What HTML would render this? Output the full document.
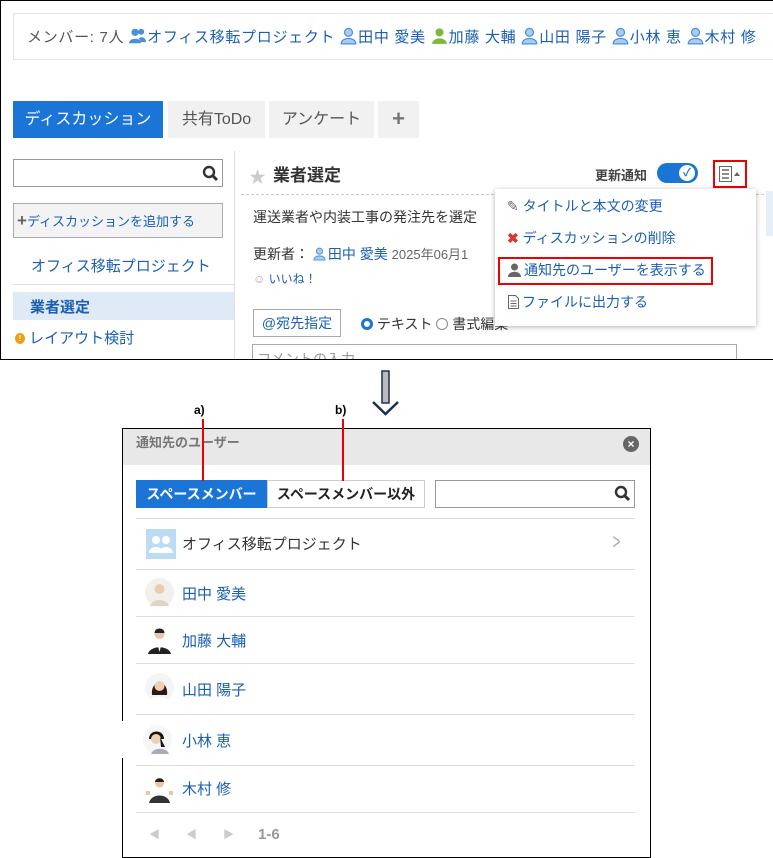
<!DOCTYPE html><html><head><meta charset="utf-8"><style>
*{margin:0;padding:0;box-sizing:border-box}
body{width:773px;height:858px;background:#fff;font-family:"Liberation Sans","Noto Sans CJK JP",sans-serif;position:relative;overflow:hidden;color:#333}
.a{position:absolute;white-space:nowrap}
.lk{color:#1a5fb4}
.ui{display:inline-block;width:13px;height:14px;vertical-align:-2px;margin-right:2px}
.mu{width:17px;height:18px;vertical-align:-3px;margin-right:1px}
</style></head><body>
<div class="a" style="left:0;top:0;width:773px;height:360px;border:1px solid #000;border-right:none;overflow:hidden">
 <div class="a" style="left:12px;top:12px;width:770px;height:47px;border:1px solid #e4e4e4;"></div>
 <div class="a" style="left:26px;top:25px;font-size:15px;color:#555;letter-spacing:0.7px">メンバー: 7人 <span class="lk"><svg class="ui mu" viewBox="0 0 14 14"><circle cx="5" cy="4" r="3" fill="#4a90d9"/><path d="M0 13c0-5 10-5 10 0z" fill="#4a90d9"/><circle cx="10" cy="3.5" r="2.5" fill="#4a90d9"/><path d="M8 9c2-2 6-1 6 3h-4z" fill="#4a90d9"/></svg>オフィス移転プロジェクト <svg class="ui mu" viewBox="0 0 14 14"><circle cx="7" cy="4" r="3.3" fill="#a9cdf0" stroke="#4a90d9"/><path d="M1 13.5c0-6 12-6 12 0z" fill="#a9cdf0" stroke="#4a90d9"/></svg>田中 愛美 <svg class="ui mu" viewBox="0 0 14 14"><circle cx="7" cy="4" r="3.3" fill="#7cb83a"/><path d="M1 13.5c0-6 12-6 12 0z" fill="#7cb83a"/></svg>加藤 大輔 <svg class="ui mu" viewBox="0 0 14 14"><circle cx="7" cy="4" r="3.3" fill="#a9cdf0" stroke="#4a90d9"/><path d="M1 13.5c0-6 12-6 12 0z" fill="#a9cdf0" stroke="#4a90d9"/></svg>山田 陽子 <svg class="ui mu" viewBox="0 0 14 14"><circle cx="7" cy="4" r="3.3" fill="#a9cdf0" stroke="#4a90d9"/><path d="M1 13.5c0-6 12-6 12 0z" fill="#a9cdf0" stroke="#4a90d9"/></svg>小林 恵 <svg class="ui mu" viewBox="0 0 14 14"><circle cx="7" cy="4" r="3.3" fill="#a9cdf0" stroke="#4a90d9"/><path d="M1 13.5c0-6 12-6 12 0z" fill="#a9cdf0" stroke="#4a90d9"/></svg>木村 修</span></div>
 <div class="a" style="left:12px;top:100px;width:150px;height:37px;background:#1a75d6;color:#fff;font-size:16px;line-height:37px;text-align:center">ディスカッション</div>
 <div class="a" style="left:167px;top:100px;width:97px;height:37px;background:#f1f1f1;color:#555;font-size:16px;line-height:37px;text-align:center">共有ToDo</div>
 <div class="a" style="left:268px;top:100px;width:105px;height:37px;background:#f1f1f1;color:#555;font-size:16px;line-height:37px;text-align:center">アンケート</div>
 <div class="a" style="left:377px;top:100px;width:41px;height:37px;background:#f1f1f1;color:#777;font-size:22px;line-height:35px;text-align:center;font-weight:bold">+</div>
 <div class="a" style="left:12px;top:158px;width:210px;height:28px;border:1px solid #999"></div>
 <svg class="a" style="left:201px;top:164px" width="17" height="17" viewBox="0 0 17 17"><circle cx="7" cy="7" r="5" fill="none" stroke="#333" stroke-width="2.4"/><path d="M10.5 10.5L15 15" stroke="#333" stroke-width="3"/></svg>
 <div class="a" style="left:12px;top:202px;width:210px;height:35px;border:1px solid #aaa;background:#f3f3f3;font-size:13px;line-height:33px;color:#1a5fb4;padding-left:3px"><b style="color:#666;font-size:17px">+</b>ディスカッションを追加する</div>
 <div class="a lk" style="left:30px;top:254px;font-size:15px">オフィス移転プロジェクト</div>
 <div class="a" style="left:12px;top:283px;width:222px;height:1px;background:#ddd"></div>
 <div class="a" style="left:12px;top:291px;width:222px;height:28px;background:#dfeaf6;font-size:15px;font-weight:bold;color:#1a5fb4;padding:4px 0 0 17px">業者選定</div>
 <div class="a" style="left:14px;top:326px;font-size:15px;color:#1a5fb4"><span style="display:inline-block;width:10px;height:11px;border-radius:50%;background:#f39c12;color:#fff;font-size:8px;line-height:11px;text-align:center;vertical-align:2px;font-weight:bold">!</span> レイアウト検討</div>
 <div class="a" style="left:233px;top:150px;width:1px;height:210px;background:#ddd"></div>
 <div class="a" style="left:248px;top:162px;font-size:17px;color:#ccc">★</div>
 <div class="a" style="left:272px;top:160px;font-size:17px;font-weight:bold;color:#333">業者選定</div>
 <div class="a" style="left:240px;top:193px;width:533px;border-top:1px dashed #ccc"></div>
 <div class="a" style="left:594px;top:164px;font-size:13px;font-weight:bold;color:#444">更新通知</div>
 <div class="a" style="left:656px;top:162px;width:41px;height:20px;border-radius:10px;background:#1a75d6"></div>
 <div class="a" style="left:678px;top:164px;width:16px;height:16px;border-radius:50%;background:#fff;color:#1a75d6;font-size:11px;line-height:16px;text-align:center;font-weight:bold">✓</div>
 <div class="a" style="left:712px;top:159px;width:34px;height:28px;border:2px solid #e00"></div>
 <svg class="a" style="left:718px;top:165px" width="22" height="16" viewBox="0 0 22 16"><rect x="0.5" y="0.5" width="12" height="15" fill="none" stroke="#666"/><path d="M3 4h7M3 8h7M3 12h7" stroke="#666" stroke-width="1.5"/><path d="M15 10l3-4 3 4z" fill="#666"/></svg>
 <div class="a" style="left:252px;top:206px;font-size:14px">運送業者や内装工事の発注先を選定</div>
 <div class="a" style="left:252px;top:243px;font-size:14px">更新者： <span class="lk"><svg class="ui" viewBox="0 0 14 14"><circle cx="7" cy="4" r="3.3" fill="#a9cdf0" stroke="#4a90d9"/><path d="M1 13.5c0-6 12-6 12 0z" fill="#a9cdf0" stroke="#4a90d9"/></svg>田中 愛美</span> <span style="color:#666;font-size:13px">2025年06月1</span></div>
 <div class="a" style="left:252px;top:269px;font-size:12px;color:#1a5fb4"><span style="color:#aaa">☺</span> いいね！</div>
 <div class="a" style="left:252px;top:308px;width:88px;height:28px;border:1px solid #aaa;font-size:14px;line-height:26px;text-align:center;color:#1a5fb4">@宛先指定</div>
 <div class="a" style="left:360px;top:313px;font-size:14px"><span style="display:inline-block;width:12px;height:12px;border-radius:50%;border:3px solid #1a75d6;background:#fff;vertical-align:-1px"></span> テキスト <span style="display:inline-block;width:12px;height:12px;border-radius:50%;border:1px solid #888;vertical-align:-1px"></span> 書式編集</div>
 <div class="a" style="left:251px;top:343px;width:485px;height:30px;border:1px solid #aaa;font-size:14px;color:#999;padding:4px">コメントの入力</div>
 <div class="a" style="left:765px;top:190px;width:8px;height:45px;background:#e6eef8"></div>
 <div class="a" style="left:494px;top:188px;width:261px;height:137px;background:#fff;box-shadow:0 1px 5px rgba(0,0,0,.3);font-size:14px;color:#1a5fb4">
  <div class="a" style="left:12px;top:7px"><span style="color:#666">✎</span> タイトルと本文の変更</div>
  <div class="a" style="left:12px;top:39px"><span style="color:#d33;font-weight:bold">✖</span> ディスカッションの削除</div>
  <div class="a" style="left:3px;top:68px;width:215px;height:28px;border:2px solid #e00"></div>
  <div class="a" style="left:12px;top:71px"><svg class="ui" viewBox="0 0 14 14" style="width:15px"><circle cx="7" cy="4" r="3.5" fill="#666"/><path d="M0.5 14c0-7 13-7 13 0z" fill="#666"/></svg>通知先のユーザーを表示する</div>
  <div class="a" style="left:12px;top:103px"><svg class="ui" viewBox="0 0 12 14"><path d="M1 .5h7l3 3V13.5H1z" fill="none" stroke="#666"/><path d="M3 6h6M3 8.5h6M3 11h6" stroke="#666"/></svg>ファイルに出力する</div>
 </div>
</div>
<svg class="a" style="left:370px;top:368px" width="32" height="50" viewBox="0 0 32 50"><rect x="12" y="3" width="7" height="32" fill="#bbb" stroke="#1c2f5a" stroke-width="1.5"/><path d="M3 34l12.5 12L28 34" fill="none" stroke="#1c2f5a" stroke-width="2.5"/></svg>
<div class="a" style="left:194px;top:403px;font-size:12px;font-weight:bold;color:#000">a)</div>
<div class="a" style="left:335px;top:403px;font-size:12px;font-weight:bold;color:#000">b)</div>
<div class="a" style="left:122px;top:428px;width:529px;height:430px;border:1px solid #000;background:#fff">
 <div class="a" style="left:0;top:0;width:527px;height:36px;background:#e8e8e8;font-size:13px;font-weight:bold;color:#777;line-height:28px;padding-left:13px">通知先のユーザー</div>
 <div class="a" style="left:500px;top:7px;width:16px;height:16px;border-radius:50%;background:#666;color:#fff;font-size:12px;line-height:16px;text-align:center;font-weight:bold">×</div>
 <div class="a" style="left:13px;top:51px;width:131px;height:28px;background:#1a75d6;color:#fff;font-size:14px;font-weight:bold;line-height:28px;text-align:center">スペースメンバー</div>
 <div class="a" style="left:144px;top:51px;width:158px;height:28px;border:1px solid #ccc;color:#222;font-size:14px;font-weight:bold;line-height:26px;text-align:center">スペースメンバー以外</div>
 <div class="a" style="left:312px;top:51px;width:200px;height:28px;border:1px solid #999"></div>
 <svg class="a" style="left:491px;top:56px" width="17" height="17" viewBox="0 0 17 17"><circle cx="7" cy="7" r="5" fill="none" stroke="#333" stroke-width="2.4"/><path d="M10.5 10.5L15 15" stroke="#333" stroke-width="3"/></svg>
 <div class="a" style="left:79px;top:-10px;width:2px;height:62px;background:#e00"></div>
 <div class="a" style="left:219px;top:-10px;width:2px;height:62px;background:#e00"></div>
 <div class="a" style="left:13px;top:89px;width:499px;height:1px;background:#ddd"></div>
 <div class="a" style="left:23px;top:100px;width:30px;height:30px;background:#bcdcf4"><svg width="30" height="30" viewBox="0 0 30 30"><circle cx="10" cy="11" r="4" fill="#fff"/><path d="M3 24c0-8 14-8 14 0z" fill="#fff"/><circle cx="20" cy="11" r="4" fill="#fff"/><path d="M13 24c0-8 14-8 14 0z" fill="#fff"/></svg></div>
 <div class="a" style="left:59px;top:104px;font-size:15px;color:#333">オフィス移転プロジェクト</div>
 <div class="a" style="left:487px;top:100px;font-size:22px;color:#aaa;transform:scaleX(.6)">&gt;</div>
 <div class="a" style="left:13px;top:140px;width:499px;height:1px;background:#ddd"></div>
 <svg class="a" style="left:22px;top:149px" width="29" height="29" viewBox="0 0 29 29"><circle cx="14.5" cy="14.5" r="14.5" fill="#f2f0ec"/><circle cx="14.5" cy="11" r="5" fill="#e8cfb4"/><path d="M5 28c2-8 17-8 19 0z" fill="#ddd6c8"/></svg>
 <div class="a lk" style="left:59px;top:154px;font-size:15px">田中 愛美</div>
 <div class="a" style="left:13px;top:187px;width:499px;height:1px;background:#ddd"></div>
 <svg class="a" style="left:22px;top:196px" width="29" height="29" viewBox="0 0 29 29"><circle cx="14.5" cy="14.5" r="14.5" fill="#fff"/><circle cx="14.5" cy="9" r="5" fill="#e8c6a8"/><path d="M9.5 8c0-6 10-6 10 0z" fill="#222"/><path d="M3 29c2-9 21-9 23 0z" fill="#222"/><path d="M13 21h3l-1.5 6z" fill="#fff"/></svg>
 <div class="a lk" style="left:59px;top:201px;font-size:15px">加藤 大輔</div>
 <div class="a" style="left:13px;top:234px;width:499px;height:1px;background:#ddd"></div>
 <svg class="a" style="left:22px;top:244px" width="29" height="29" viewBox="0 0 29 29"><circle cx="14.5" cy="14.5" r="14.5" fill="#f4f4f4"/><path d="M7 22c-2-16 17-16 15 0z" fill="#2a1d18"/><circle cx="14.5" cy="13" r="5" fill="#efd0b5"/><path d="M5 29c2-7 17-7 19 0z" fill="#fff"/></svg>
 <div class="a lk" style="left:59px;top:250px;font-size:15px">山田 陽子</div>
 <div class="a" style="left:13px;top:285px;width:499px;height:1px;background:#ddd"></div>
 <div class="a" style="left:-2px;top:292px;width:3px;height:37px;background:#fff"></div>
 <svg class="a" style="left:20px;top:296px" width="29" height="29" viewBox="0 0 29 29"><circle cx="14.5" cy="14.5" r="14.5" fill="#f6f6f6"/><path d="M6 14c0-10 15-10 15 0z" fill="#1a1410"/><circle cx="13" cy="14" r="5" fill="#efd0b5"/><path d="M17 12l5 10h-4z" fill="#1a1410"/><path d="M8 29c2-7 16-7 18 0z" fill="#aab"/></svg>
 <div class="a lk" style="left:59px;top:301px;font-size:15px">小林 恵</div>
 <div class="a" style="left:13px;top:336px;width:499px;height:1px;background:#ddd"></div>
 <svg class="a" style="left:22px;top:345px" width="29" height="29" viewBox="0 0 29 29"><circle cx="14.5" cy="14.5" r="14.5" fill="#fff"/><circle cx="14.5" cy="9" r="4.5" fill="#e8c6a8"/><path d="M10 8c0-5 9-5 9 0z" fill="#222"/><path d="M4 29c2-10 19-10 21 0z" fill="#333"/><path d="M1 17h4v4H1zM24 17h4v4h-4z" fill="#e8c6a8"/></svg>
 <div class="a lk" style="left:59px;top:349px;font-size:15px">木村 修</div>
 <div class="a" style="left:13px;top:383px;width:499px;height:1px;background:#ddd"></div>
 <div class="a" style="left:26px;top:397px;font-size:11px;color:#ccc;letter-spacing:26px">◀◀▶</div>
 <div class="a" style="left:135px;top:397px;font-size:15px;font-weight:bold;color:#999">1-6</div>
</div>
</body></html>
